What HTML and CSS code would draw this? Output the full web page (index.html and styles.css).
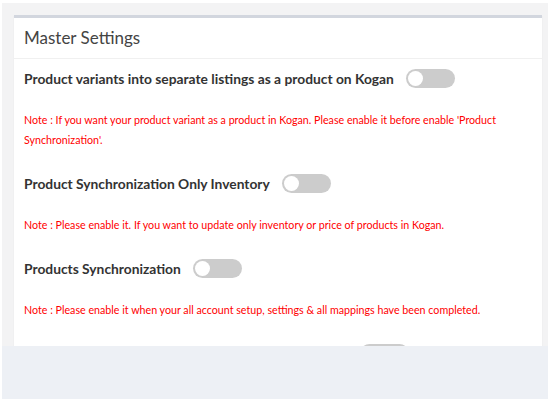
FILE: index.html
```html
<!DOCTYPE html>
<html>
<head>
<meta charset="utf-8">
<link rel="stylesheet" href="styles.css">
</head>
<body>
<div class="page">
  <div class="card">
    <div class="card-header">Master Settings</div>
    <div class="card-body">
      <div class="setting">
        <div class="setting-row"><span class="label">Product variants into separate listings as a product on Kogan</span><span class="toggle"><span class="knob"></span></span></div>
        <p class="note">Note : If you want your product variant as a product in Kogan. Please enable it before enable 'Product Synchronization'.</p>
      </div>
      <div class="setting">
        <div class="setting-row"><span class="label">Product Synchronization Only Inventory</span><span class="toggle"><span class="knob"></span></span></div>
        <p class="note">Note : Please enable it. If you want to update only inventory or price of products in Kogan.</p>
      </div>
      <div class="setting">
        <div class="setting-row"><span class="label">Products Synchronization</span><span class="toggle"><span class="knob"></span></span></div>
        <p class="note">Note : Please enable it when your all account setup, settings &amp; all mappings have been completed.</p>
      </div>
      <div class="setting">
        <div class="setting-row"><span class="label-hidden"></span><span class="toggle"><span class="knob"></span></span></div>
      </div>
    </div>
  </div>
</div>
<div class="footer"></div>
</body>
</html>
```
FILE: styles.css
```css
html, body {
  margin: 0;
  padding: 0;
  background: #ffffff;
  font-family: Lato, "Open Sans", sans-serif;
}
.page {
  margin: 3px 0 0 2px;
  height: 343px;
  overflow: hidden;
  background: #f3f3f4;
  padding: 12px 6px 0 12px;
  box-sizing: border-box;
}
.card {
  background: #ffffff;
  border-top: 3px solid #d2d6de;
  box-shadow: 0 1px 1px rgba(0,0,0,0.08);
  height: 400px;
}
.card-header {
  padding: 10px 10px 10px 10px;
  font-size: 17px;
  color: #444;
  font-weight: 400;
  border-bottom: 1px solid #f0f0f0;
  line-height: 20px;
}
.card-body {
  padding: 9px 10px;
}
.setting-row {
  display: flex;
  align-items: center;
  gap: 12px;
  height: 20px;
}
.label {
  font-size: 13.8px;
  font-weight: 700;
  color: #333;
}
.label-hidden {
  width: 324px;
}
.toggle {
  width: 49px;
  height: 19px;
  border-radius: 10px;
  background: #cccccc;
  display: flex;
  align-items: center;
  padding-left: 2px;
  box-sizing: border-box;
}
.knob {
  width: 15px;
  height: 15px;
  border-radius: 50%;
  background: #fff;
}
.note {
  margin: 22px 0 23px 0;
  font-size: 10.7px;
  line-height: 20px;
  color: #ff0000;
}
.footer {
  margin-left: 2px;
  height: 53px;
  background: #edf0f5;
}
```
